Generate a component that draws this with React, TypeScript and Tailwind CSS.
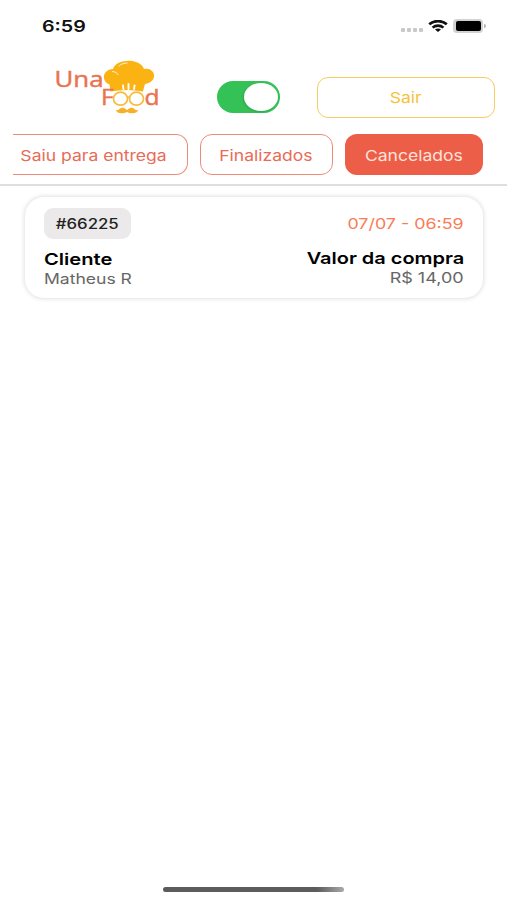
import React from "react";
import { clsx } from "clsx";

function Label({ children, className }: { children: React.ReactNode; className?: string }) {
  return <span className={clsx("block whitespace-nowrap leading-5", className)}>{children}</span>;
}

function StatusBar() {
  return (
    <div className="flex h-[52px] items-center justify-between pl-[42px] pr-[21px]">
      <Label className="origin-left scale-x-[1.23] text-[16px] font-semibold text-[#111]">6:59</Label>
      <div className="flex items-center">
        <div className="mr-[5px] mt-[7px] flex gap-[2px]">
          {[0, 1, 2, 3].map((i) => (
            <i key={i} className="h-1 w-1 rounded-[1px] bg-[#c9c9c9]" />
          ))}
        </div>
        <svg className="mr-[5px] h-3 w-[20px]" viewBox="0 0 20 12" fill="none" stroke="#111" strokeWidth="2.6">
          <path d="M1.2 4.300C6 0 14 0 18.800 4.300" />
          <path d="M4.600 7.600c3-2.700 7.800-2.700 10.800 0" />
          <path d="M7 9.600c1.700-1.500 4.300-1.500 6 0L10 12z" fill="#111" stroke="none" />
        </svg>
        <div className="h-[14px] w-[30px] rounded-[4px] bg-[#d2d2d2] p-[2px] pl-[3px]">
          <div className="h-[10px] w-[25px] rounded-[2px] bg-black" />
        </div>
        <i className="ml-px h-1 w-[2px] rounded-r bg-[#b5b5b5]" />
      </div>
    </div>
  );
}

function Logo() {
  return (
    <svg className="h-[56px] w-[106px]" viewBox="54 58 106 56" fontFamily="'Open Sans', sans-serif">
      <path
        d="M110.500 91.500 109.500 84.500C101 81.500 102 69.500 113 69C116 58.500 140 57.500 144 69C156 67 158.500 82 145 84L143 91.500Q127 88.500 110.500 91.500Z"
        fill="#fbb314"
      />
      <path
        d="M127 110.300c-2-3-6-3.500-8-.8-1 1-2 1-3 0 0 4 7 5 11 2.500 4 2.500 11 1.500 11-2.500-1 1-2 1-3 0-2-2.700-6-2.200-8 .8Z"
        fill="#f7b02a"
      />
      <g fill="none" stroke="#fff" strokeLinecap="round">
        <path d="M112.500 71.500c3 .3 4.500 1.300 5.500 3.200" strokeWidth=".8" />
        <path d="M119 66c2-2 5-3 8-3" strokeWidth=".8" />
        <path d="m123 85.500.4 3.500M128.500 84v5M134.500 85.500l-.4 3.500" strokeWidth="1.900" />
      </g>
      <g fill="#ea7350" stroke="#ea7350" strokeWidth=".45">
        <text x="54.500" y="86.500" fontSize="22.500" textLength="49" lengthAdjust="spacingAndGlyphs">Una</text>
        <text x="101" y="104.500" fontSize="21.500" textLength="12.500" lengthAdjust="spacingAndGlyphs">F</text>
        <text x="144.500" y="104.500" fontSize="21.500" textLength="15" lengthAdjust="spacingAndGlyphs">d</text>
      </g>
      <g fill="#fff" stroke="#f8bb3c" strokeWidth="1.700">
        <ellipse cx="120.500" cy="98.700" rx="7" ry="6.500" />
        <ellipse cx="136.500" cy="98.700" rx="7" ry="6.500" />
        <path d="M127 97.500q1.500-1 3 0" fill="none" />
      </g>
    </svg>
  );
}

function Tab({ label, className }: { label: string; className: string }) {
  return (
    <button className={clsx("flex h-[41px] shrink-0 items-center justify-center border-[#ef8a78] text-[15px]", className)}>
      <Label className="translate-y-[0.5px] scale-x-[1.17]">{label}</Label>
    </button>
  );
}

export default function App() {
  return (
    <div className="flex h-[900px] w-[507px] flex-col overflow-hidden bg-white font-['Inter','Liberation_Sans',sans-serif]">
      <StatusBar />
      <header className="border-b-2 border-[#dedede]">
        <div className="flex h-[82px] items-start pl-[54px] pr-3 pt-1.5">
          <Logo />
          <div className="ml-[57px] mt-[23px] flex h-8 w-[63px] items-center justify-end rounded-full bg-[#34c156] pr-[2px]">
            <div className="h-[28px] w-[34px] rounded-[50%] bg-white shadow-[-1px_1px_2px_#0002]" />
          </div>
          <button className="ml-[37px] mt-[18.500px] flex h-[41px] w-[178px] items-center justify-center rounded-[11px] border-[1.500px] border-[#f8cc62] text-[15px] text-[#f8c13c]">
            <Label className="translate-y-[0.5px] scale-x-[1.17]">Sair</Label>
          </button>
        </div>
        <nav className="flex h-[50px] gap-3 pl-[13px]">
          <Tab label="Saiu para entrega" className="w-[174.500px] rounded-r-[12px] border-y border-r pr-3 text-[#e86b57]" />
          <Tab label="Finalizados" className="w-[133.500px] rounded-[12px] border text-[#e86b57]" />
          <Tab label="Cancelados" className="w-[138px] rounded-[12px] bg-[#ec5e48] text-[#ffe3da]" />
        </nav>
      </header>
      <main className="flex-1 pl-[25px] pr-[24px] pt-[11px]">
        <article className="flex h-[101px] justify-between rounded-[19px] bg-white pl-[19px] pr-[19px] pt-[11px] shadow-[0_0_4px_1px_#0000001f]">
          <div>
            <div className="mb-[10px] flex h-[31px] w-[87px] items-center justify-center rounded-[9px] bg-[#ece9ea] text-[14px] font-medium text-[#222]">
              <Label className="scale-x-[1.2]">#66225</Label>
            </div>
            <Label className="origin-left scale-x-[1.22] text-[16.500px] font-semibold text-black">Cliente</Label>
            <Label className="origin-left scale-x-[1.21] text-[14.500px] text-[#666]">Matheus R</Label>
          </div>
          <div className="flex flex-col items-end pt-[6px]">
            <Label className="mb-[14px] origin-right scale-x-[1.19] text-[15px] text-[#fa7b55]">07/07 - 06:59</Label>
            <Label className="origin-right scale-x-[1.21] text-[16.500px] font-semibold text-black">Valor da compra</Label>
            <Label className="origin-right scale-x-[1.24] text-[14.500px] text-[#666]">R$ 14,00</Label>
          </div>
        </article>
      </main>
      <footer className="flex h-[14px] justify-center">
        <div className="mt-px h-[5px] w-[181px] rounded-full bg-linear-to-r from-[#5c5c5c] from-85% to-[#aaa]" />
      </footer>
    </div>
  );
}
